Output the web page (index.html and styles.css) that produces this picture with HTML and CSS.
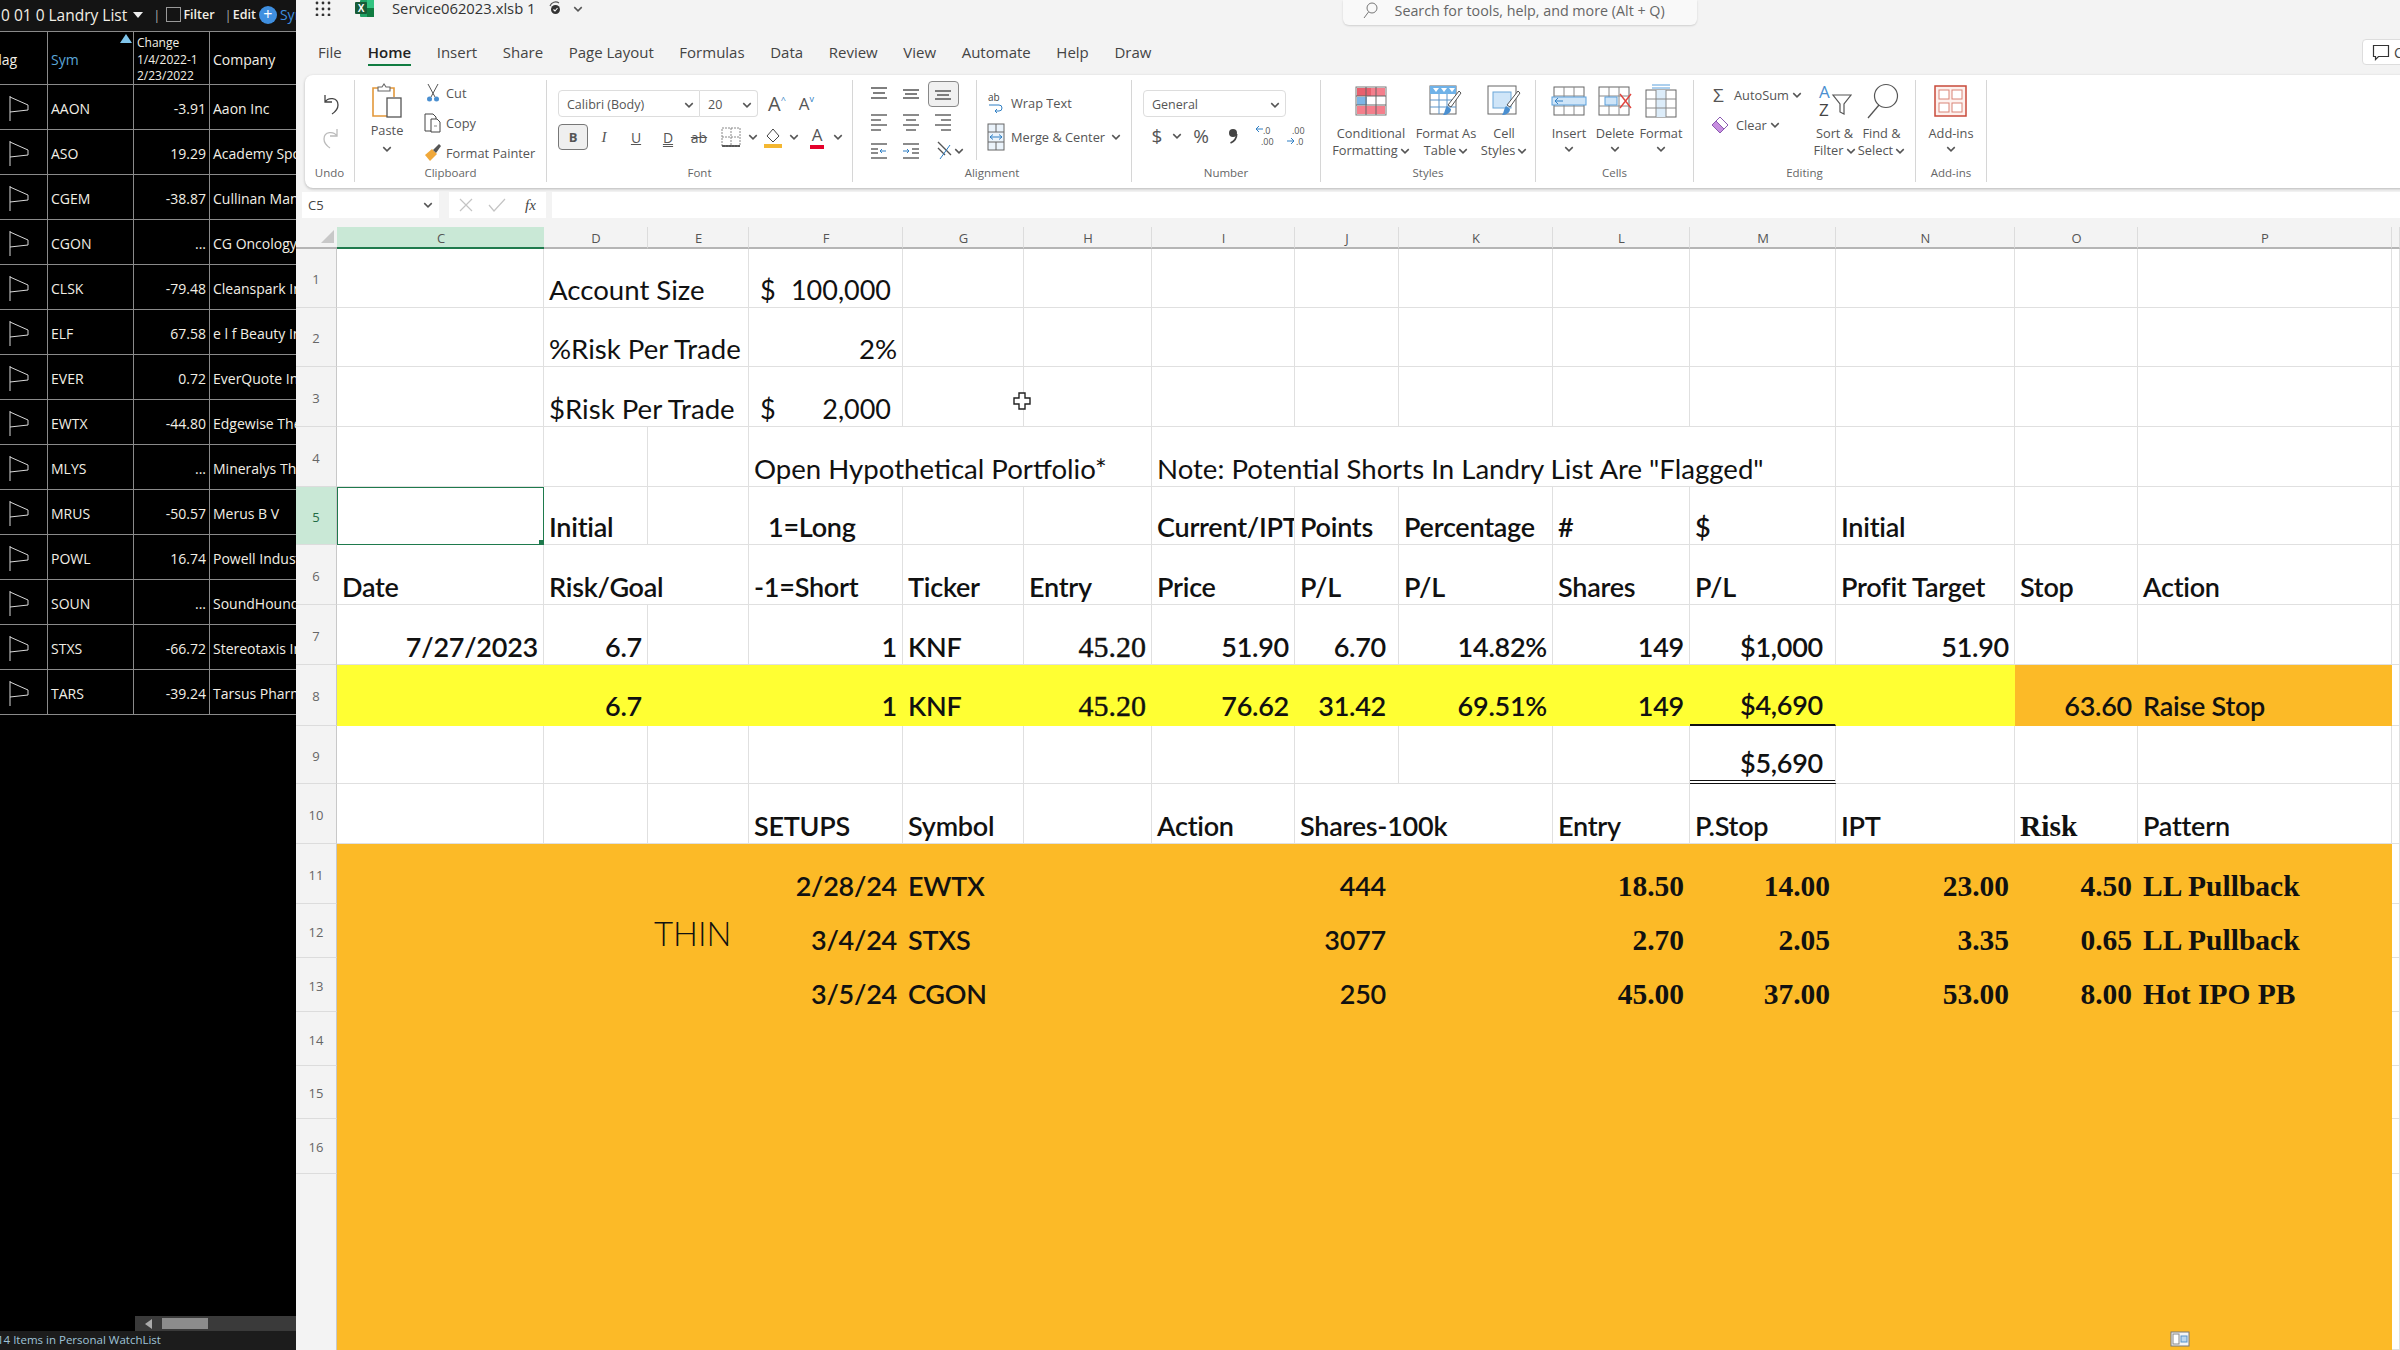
FILE: index.html
```html
<!DOCTYPE html>
<html lang="en">
  <head>
    <meta charset="UTF-8" />
    <title>Service062023.xlsb</title>
    <link rel="stylesheet" href="styles.css">
  </head>
  <body>
    <svg class="sprite">
      <symbol id="chev" viewBox="0 0 8 6"><path d="M1 1.5l3 3 3-3" fill="none" stroke="#555" stroke-width="1.2"/></symbol>
      <symbol id="flag" viewBox="0 0 20 25"><path d="M1 0V25M1 1L19 9V14L1 16" fill="none" stroke="#d8d8d8" stroke-width="1"/></symbol>
    </svg>

    <aside class="watchlist">
      <div class="wl-bar">
        <span class="wl-title">0 01 0 Landry List</span><span class="wl-caret"></span>
        <span class="wl-sep">|</span><span class="wl-check"></span><span class="wl-link">Filter</span>
        <span class="wl-sep">|</span><span class="wl-link">Edit</span>
        <span class="wl-plus">+</span><span class="wl-sym">Symbol</span>
      </div>
      <div class="wl-row wl-head">
        <div class="wl-cell wl-flaghead">Flag</div>
        <div class="wl-cell wl-symhead">Sym<span class="wl-sort"></span></div>
        <div class="wl-cell wl-change">Change<br>1/4/2022-1<br>2/23/2022</div>
        <div class="wl-cell">Company</div>
      </div>
      <div class="wl-row"><div class="wl-cell wl-fl"><svg width="20" height="25"><use href="#flag"/></svg></div><div class="wl-cell">AAON</div><div class="wl-cell wl-num">-3.91</div><div class="wl-cell">Aaon Inc</div></div>
      <div class="wl-row"><div class="wl-cell wl-fl"><svg width="20" height="25"><use href="#flag"/></svg></div><div class="wl-cell">ASO</div><div class="wl-cell wl-num">19.29</div><div class="wl-cell">Academy Sports</div></div>
      <div class="wl-row"><div class="wl-cell wl-fl"><svg width="20" height="25"><use href="#flag"/></svg></div><div class="wl-cell">CGEM</div><div class="wl-cell wl-num">-38.87</div><div class="wl-cell">Cullinan Management</div></div>
      <div class="wl-row"><div class="wl-cell wl-fl"><svg width="20" height="25"><use href="#flag"/></svg></div><div class="wl-cell">CGON</div><div class="wl-cell wl-num">...</div><div class="wl-cell">CG Oncology</div></div>
      <div class="wl-row"><div class="wl-cell wl-fl"><svg width="20" height="25"><use href="#flag"/></svg></div><div class="wl-cell">CLSK</div><div class="wl-cell wl-num">-79.48</div><div class="wl-cell">Cleanspark Inc</div></div>
      <div class="wl-row"><div class="wl-cell wl-fl"><svg width="20" height="25"><use href="#flag"/></svg></div><div class="wl-cell">ELF</div><div class="wl-cell wl-num">67.58</div><div class="wl-cell">e l f Beauty Inc</div></div>
      <div class="wl-row"><div class="wl-cell wl-fl"><svg width="20" height="25"><use href="#flag"/></svg></div><div class="wl-cell">EVER</div><div class="wl-cell wl-num">0.72</div><div class="wl-cell">EverQuote Inc</div></div>
      <div class="wl-row"><div class="wl-cell wl-fl"><svg width="20" height="25"><use href="#flag"/></svg></div><div class="wl-cell">EWTX</div><div class="wl-cell wl-num">-44.80</div><div class="wl-cell">Edgewise Therapeutics</div></div>
      <div class="wl-row"><div class="wl-cell wl-fl"><svg width="20" height="25"><use href="#flag"/></svg></div><div class="wl-cell">MLYS</div><div class="wl-cell wl-num">...</div><div class="wl-cell">Mineralys Therapeutics</div></div>
      <div class="wl-row"><div class="wl-cell wl-fl"><svg width="20" height="25"><use href="#flag"/></svg></div><div class="wl-cell">MRUS</div><div class="wl-cell wl-num">-50.57</div><div class="wl-cell">Merus B V</div></div>
      <div class="wl-row"><div class="wl-cell wl-fl"><svg width="20" height="25"><use href="#flag"/></svg></div><div class="wl-cell">POWL</div><div class="wl-cell wl-num">16.74</div><div class="wl-cell">Powell Industries</div></div>
      <div class="wl-row"><div class="wl-cell wl-fl"><svg width="20" height="25"><use href="#flag"/></svg></div><div class="wl-cell">SOUN</div><div class="wl-cell wl-num">...</div><div class="wl-cell">SoundHound AI</div></div>
      <div class="wl-row"><div class="wl-cell wl-fl"><svg width="20" height="25"><use href="#flag"/></svg></div><div class="wl-cell">STXS</div><div class="wl-cell wl-num">-66.72</div><div class="wl-cell">Stereotaxis Inc</div></div>
      <div class="wl-row"><div class="wl-cell wl-fl"><svg width="20" height="25"><use href="#flag"/></svg></div><div class="wl-cell">TARS</div><div class="wl-cell wl-num">-39.24</div><div class="wl-cell">Tarsus Pharmaceuticals</div></div>
      <div class="wl-fill"></div>
      <div class="wl-scroll"><span class="wl-arrow"></span><span class="wl-thumb"></span></div>
      <div class="wl-status">14 Items in Personal WatchList</div>
    </aside>

    <main class="app">
      <header class="titlebar">
        <svg class="waffle" width="16" height="16" viewBox="0 0 16 16" fill="#333"><circle cx="2" cy="3" r="1.4"/><circle cx="8" cy="3" r="1.4"/><circle cx="14" cy="3" r="1.4"/><circle cx="2" cy="9" r="1.4"/><circle cx="8" cy="9" r="1.4"/><circle cx="14" cy="9" r="1.4"/><circle cx="2" cy="15" r="1.4"/><circle cx="8" cy="15" r="1.4"/><circle cx="14" cy="15" r="1.4"/></svg>
        <svg class="xl-logo" width="19" height="17" viewBox="0 0 19 17"><rect x="5" y="0" width="14" height="17" rx="1" fill="#21a366"/><rect x="12" y="0" width="7" height="8" fill="#33c481"/><rect x="12" y="8" width="7" height="9" fill="#107c41"/><rect x="0" y="2" width="12" height="12" rx="1" fill="#185c37"/><text x="6" y="12" class="xl-x">X</text></svg>
        <span class="doc-name">Service062023.xlsb 1</span>
        <svg class="sync" width="16" height="16" viewBox="0 0 16 16"><path d="M12 3a6 6 0 0 0-9 3" fill="none" stroke="#555" stroke-width="1.2"/><circle cx="8.5" cy="9.5" r="4.5" fill="#333"/><path d="M6.5 9.5l1.5 1.5 2.5-3" fill="none" stroke="#fff" stroke-width="1.1"/></svg>
        <svg class="title-chev" width="10" height="8"><use href="#chev"/></svg>
        <div class="search">
          <svg width="16" height="18" viewBox="0 0 16 18"><circle cx="10" cy="6" r="5" fill="none" stroke="#777"/><path d="M6.5 10L2 16" stroke="#777"/></svg>
          <span>Search for tools, help, and more (Alt + Q)</span>
        </div>
      </header>

      <nav class="tabs">
        <span class="tab tab-file">File</span>
        <span class="tab tab-on">Home</span>
        <span class="tab">Insert</span>
        <span class="tab">Share</span>
        <span class="tab">Page Layout</span>
        <span class="tab">Formulas</span>
        <span class="tab">Data</span>
        <span class="tab">Review</span>
        <span class="tab">View</span>
        <span class="tab">Automate</span>
        <span class="tab">Help</span>
        <span class="tab">Draw</span>
        <div class="comments">
          <svg width="18" height="18" viewBox="0 0 18 18"><path d="M1.5 2.5h15v11h-10l-3 3v-3h-2z" fill="none" stroke="#333" stroke-width="1.2"/></svg>
          <span>Comments</span>
        </div>
      </nav>

      <section class="ribbon">
        <div class="group g-undo">
          <div class="group-body undo-body">
            <svg width="20" height="24" viewBox="0 0 20 24"><path d="M4 3v7h7M4 10c3-5 13-5 13 3 0 4-3 7-6 9" fill="none" stroke="#444" stroke-width="1.3"/></svg>
            <svg width="20" height="24" viewBox="0 0 20 24"><path d="M16 3v7H9M16 10C13 5 3 5 3 13c0 4 3 7 6 9" fill="none" stroke="#bbb" stroke-width="1.3"/></svg>
          </div>
          <div class="group-label">Undo</div>
        </div>

        <div class="group g-clip">
          <div class="group-body clip-body">
            <div class="paste">
              <svg width="32" height="36" viewBox="0 0 32 36"><path d="M8 5H2v28h16" fill="#fff" stroke="#e3983a" stroke-width="1.6"/><path d="M18 5h5v9" fill="none" stroke="#e3983a" stroke-width="1.6"/><path d="M7 8V4h4l2-3 2 3h4v4z" fill="#fff" stroke="#666" stroke-width="1.1"/><rect x="16" y="15" width="14" height="19" fill="#fff" stroke="#555" stroke-width="1.3"/></svg>
              <span>Paste</span>
              <svg width="10" height="8"><use href="#chev"/></svg>
            </div>
            <div class="clip-list">
              <div class="clip-item"><svg width="14" height="20" viewBox="0 0 14 20"><path d="M2 1l7 13M12 1L5 14" stroke="#555" fill="none"/><circle cx="3.5" cy="16" r="2.5" fill="#4a8fd0"/><circle cx="10.5" cy="16" r="2.5" fill="#4a8fd0"/></svg><span>Cut</span></div>
              <div class="clip-item"><svg width="18" height="20" viewBox="0 0 18 20"><path d="M1 1h8l3 3v14H1z" fill="#fff" stroke="#444"/><path d="M7 6h6l3 3v10H7z" fill="#fff" stroke="#444"/><path d="M10 13h3" stroke="#888"/></svg><span>Copy</span></div>
              <div class="clip-item"><svg width="18" height="20" viewBox="0 0 18 20"><path d="M1 12l7-6 5 5-7 7z" fill="#f0a83a"/><path d="M9 7l6-6 2 2-5 7z" fill="#555"/></svg><span>Format Painter</span></div>
            </div>
          </div>
          <div class="group-label">Clipboard</div>
        </div>

        <div class="group g-font">
          <div class="group-body font-body">
            <div class="font-top">
              <div class="combo combo-font"><span>Calibri (Body)</span><svg width="10" height="8"><use href="#chev"/></svg></div>
              <div class="combo combo-size"><span>20</span><svg width="10" height="8"><use href="#chev"/></svg></div>
              <span class="grow">A<sup>^</sup></span>
              <span class="shrink">A<sup>v</sup></span>
            </div>
            <div class="font-tools">
              <span class="btn-bold">B</span>
              <span class="t-i">I</span>
              <span class="t-u">U</span>
              <span class="t-d">D</span>
              <span class="t-s">ab</span>
              <svg width="20" height="20" viewBox="0 0 20 20"><path d="M1 1h18v18H1zM10 1v18M1 10h18" fill="none" stroke="#888" stroke-dasharray="2 1"/><path d="M1 19h18" stroke="#333" stroke-width="1.5"/></svg>
              <svg width="10" height="8"><use href="#chev"/></svg>
              <svg width="20" height="22" viewBox="0 0 20 22"><path d="M4 10l6-7 6 7-6 6z" fill="#fff" stroke="#444"/><rect x="1" y="18" width="18" height="4" fill="#f4b731"/></svg>
              <svg width="10" height="8"><use href="#chev"/></svg>
              <span class="t-color">A</span>
              <svg width="10" height="8"><use href="#chev"/></svg>
            </div>
          </div>
          <div class="group-label">Font</div>
        </div>

        <div class="group g-align">
          <div class="group-body align-body">
            <div class="align-grid">
              <svg width="18" height="14" viewBox="0 0 18 14"><path d="M1 1h16M3 6h12M1 11h16" stroke="#555" stroke-width="1.4"/></svg>
              <svg width="18" height="14" viewBox="0 0 18 14"><path d="M1 3h16M3 7h12M1 11h16" stroke="#555" stroke-width="1.4"/></svg>
              <span class="align-on"><svg width="18" height="14" viewBox="0 0 18 14"><path d="M1 4h16M3 8h12M1 12h16" stroke="#555" stroke-width="1.4"/></svg></span>
              <svg width="18" height="18" viewBox="0 0 18 18"><path d="M1 2h16M1 7h10M1 12h16M1 17h10" stroke="#666" stroke-width="1.3"/></svg>
              <svg width="18" height="18" viewBox="0 0 18 18"><path d="M1 2h16M4 7h10M1 12h16M4 17h10" stroke="#666" stroke-width="1.3"/></svg>
              <svg width="18" height="18" viewBox="0 0 18 18"><path d="M1 2h16M7 7h10M1 12h16M7 17h10" stroke="#666" stroke-width="1.3"/></svg>
              <svg width="18" height="18" viewBox="0 0 18 18"><path d="M1 2h16M1 16h16M1 7h7M1 11h7" stroke="#666" stroke-width="1.3"/><path d="M16 9h-6m2-2l-2 2 2 2" stroke="#2f7fc4" fill="none"/></svg>
              <svg width="18" height="18" viewBox="0 0 18 18"><path d="M1 2h16M1 16h16M10 7h7M10 11h7" stroke="#666" stroke-width="1.3"/><path d="M1 9h6m-2-2l2 2-2 2" stroke="#2f7fc4" fill="none"/></svg>
              <span class="orient"><svg width="18" height="22" viewBox="0 0 18 22"><path d="M2 2l13 13M2 8l7 7" stroke="#555" stroke-width="1.4"/><path d="M14 5L4 19" stroke="#2f7fc4"/></svg><svg width="10" height="8"><use href="#chev"/></svg></span>
            </div>
            <div class="wrap-list">
              <div class="wrap-item"><svg class="ab" width="18" height="24" viewBox="0 0 18 24"><path d="M2 14h10a3 3 0 0 1 0 6H8m2-2l-2 2 2 2" stroke="#2f7fc4" fill="none"/><text x="1" y="10" class="ab-text">ab</text></svg><span>Wrap Text</span></div>
              <div class="wrap-item"><svg width="18" height="28" viewBox="0 0 18 28"><rect x="1" y="1" width="16" height="26" fill="#eaf3fb" stroke="#666"/><path d="M1 9h16M1 19h16M9 1v8M9 19v8" stroke="#666"/><path d="M3 14h12m-9-2.5L3 14l3 2.5m6-5l3 2.5-3 2.5" stroke="#2f7fc4" fill="none"/></svg><span>Merge &amp; Center</span><svg width="10" height="8"><use href="#chev"/></svg></div>
            </div>
          </div>
          <div class="group-label">Alignment</div>
        </div>

        <div class="group g-num">
          <div class="group-body num-body">
            <div class="combo combo-num"><span>General</span><svg width="10" height="8"><use href="#chev"/></svg></div>
            <div class="num-tools">
              <span class="t-big">$</span>
              <svg width="10" height="8"><use href="#chev"/></svg>
              <span class="t-big">%</span>
              <svg width="10" height="16" viewBox="0 0 10 16"><circle cx="5" cy="5" r="4" fill="#444"/><path d="M8.6 6C8.6 10 6 13.5 2.5 15" fill="none" stroke="#444" stroke-width="1.8"/></svg>
              <svg width="20" height="24" viewBox="0 0 20 24"><text x="8" y="10" class="dec">.0</text><text x="6" y="21" class="dec">.00</text><path d="M8 5H1m3-3L1 5l3 3" stroke="#2f7fc4" fill="none"/></svg>
              <svg width="20" height="24" viewBox="0 0 20 24"><text x="6" y="10" class="dec">.00</text><text x="10" y="21" class="dec">.0</text><path d="M1 17h7m-3-3l3 3-3 3" stroke="#2f7fc4" fill="none"/></svg>
            </div>
          </div>
          <div class="group-label">Number</div>
        </div>

        <div class="group g-styles">
          <div class="group-body styles-body">
            <div class="big">
              <svg width="32" height="30" viewBox="0 0 32 30"><rect x="1" y="1" width="30" height="28" fill="#fff" stroke="#777"/><rect x="2" y="2" width="14" height="8" fill="#e8606e"/><rect x="2" y="20" width="28" height="8" fill="#f47f8c"/><rect x="16" y="2" width="14" height="8" fill="#f47f8c"/><rect x="2" y="11" width="10" height="8" fill="#7db6e6"/><path d="M1 10h30M1 19h30M11 1v28M21 1v28" stroke="#666"/></svg>
              <span>Conditional</span>
              <span>Formatting<svg width="10" height="8"><use href="#chev"/></svg></span>
            </div>
            <div class="big">
              <svg width="34" height="32" viewBox="0 0 34 32"><rect x="1" y="1" width="26" height="28" fill="#fff" stroke="#666"/><rect x="1" y="1" width="26" height="8" fill="#6fb2e8"/><path d="M4 3l3 4 3-4zM12 3l3 4 3-4zM20 3l3 4 3-4z" fill="#fff"/><path d="M1 15h26M1 22h26M10 9v20M18 9v20" stroke="#5a93c8"/><path d="M32 8L22 22l-3-2L30 6z" fill="#fff" stroke="#555"/><path d="M18 21l4 3c0 4-4 6-8 6 2-2 2-7 4-9z" fill="#4a8fd0"/></svg>
              <span>Format As</span>
              <span>Table<svg width="10" height="8"><use href="#chev"/></svg></span>
            </div>
            <div class="big">
              <svg width="34" height="32" viewBox="0 0 34 32"><rect x="1" y="1" width="28" height="28" fill="#fff" stroke="#666"/><rect x="6" y="7" width="18" height="16" fill="#cfe5f8" stroke="#6aa6d8"/><path d="M33 8L23 22l-3-2L31 6z" fill="#fff" stroke="#555"/><path d="M19 21l4 3c0 4-4 6-8 6 2-2 2-7 4-9z" fill="#4a8fd0"/></svg>
              <span>Cell</span>
              <span>Styles<svg width="10" height="8"><use href="#chev"/></svg></span>
            </div>
          </div>
          <div class="group-label">Styles</div>
        </div>

        <div class="group g-cells">
          <div class="group-body cells-body">
            <div class="big">
              <svg width="36" height="30" viewBox="0 0 36 30"><rect x="3" y="1" width="30" height="28" fill="#fff" stroke="#666"/><path d="M3 10h30M3 20h30M13 1v28M23 1v28" stroke="#888"/><rect x="1" y="11" width="34" height="8" fill="#cfe5f8" stroke="#5aa0dc"/><path d="M12 15H4m3-3l-3 3 3 3" stroke="#2f7fc4" fill="none"/></svg>
              <span>Insert</span>
              <svg width="10" height="8"><use href="#chev"/></svg>
            </div>
            <div class="big">
              <svg width="36" height="30" viewBox="0 0 36 30"><rect x="2" y="1" width="30" height="28" fill="#fff" stroke="#666"/><path d="M2 10h30M2 20h30M12 1v28M22 1v28" stroke="#888"/><rect x="8" y="11" width="12" height="8" fill="#cfe5f8" stroke="#5aa0dc"/><path d="M23 8l11 14M34 8L23 22" stroke="#e0443e" stroke-width="1.4"/></svg>
              <span>Delete</span>
              <svg width="10" height="8"><use href="#chev"/></svg>
            </div>
            <div class="big">
              <svg width="34" height="34" viewBox="0 0 34 34"><path d="M8 1h18M8 4h18" stroke="#5aa0dc"/><rect x="2" y="6" width="30" height="27" fill="#fff" stroke="#666"/><rect x="12" y="6" width="10" height="27" fill="#dcecf9"/><path d="M2 15h30M2 24h30M12 6v27M22 6v27" stroke="#888"/></svg>
              <span>Format</span>
              <svg width="10" height="8"><use href="#chev"/></svg>
            </div>
          </div>
          <div class="group-label">Cells</div>
        </div>

        <div class="group g-edit">
          <div class="group-body edit-body">
            <div class="edit-list">
              <div class="edit-item"><span class="sigma">&Sigma;</span><span>AutoSum</span><svg width="10" height="8"><use href="#chev"/></svg></div>
              <div class="edit-item"><svg class="eraser" width="18" height="18" viewBox="0 0 18 18"><path d="M9 1l8 8-8 8-8-8z" fill="#fff" stroke="#8a5ab0"/><path d="M5 5l8 8-4 4-8-8z" fill="#c78fe0" stroke="#8a5ab0"/></svg><span>Clear</span><svg width="10" height="8"><use href="#chev"/></svg></div>
            </div>
            <div class="big">
              <svg width="34" height="36" viewBox="0 0 34 36"><text x="1" y="15" class="az-a">A</text><text x="1" y="33" class="az-z">Z</text><path d="M15 12h18l-7 9v10l-4-2v-8z" fill="none" stroke="#555" stroke-width="1.2"/></svg>
              <span>Sort &amp;</span>
              <span>Filter<svg width="10" height="8"><use href="#chev"/></svg></span>
            </div>
            <div class="big">
              <svg width="34" height="36" viewBox="0 0 34 36"><circle cx="21" cy="13" r="11.5" fill="none" stroke="#555" stroke-width="1.2"/><path d="M14 22L3 35" stroke="#555" stroke-width="1.3"/></svg>
              <span>Find &amp;</span>
              <span>Select<svg width="10" height="8"><use href="#chev"/></svg></span>
            </div>
          </div>
          <div class="group-label">Editing</div>
        </div>

        <div class="group g-addins">
          <div class="group-body addins-body">
            <div class="big">
              <svg width="33" height="32" viewBox="0 0 33 32"><rect x="1" y="1" width="31" height="30" fill="#fdf1ee" stroke="#c8493a" stroke-width="1.5"/><rect x="5" y="5" width="10" height="9" fill="#fff" stroke="#d98476"/><rect x="18" y="5" width="10" height="9" fill="#fff" stroke="#d98476"/><rect x="5" y="18" width="10" height="9" fill="#fff" stroke="#d98476"/><rect x="18" y="18" width="10" height="9" fill="#fff" stroke="#d98476"/></svg>
              <span>Add-ins</span>
              <svg width="10" height="8"><use href="#chev"/></svg>
            </div>
          </div>
          <div class="group-label">Add-ins</div>
        </div>
      </section>

      <div class="formula-bar">
        <div class="name-box"><span>C5</span><svg width="10" height="8"><use href="#chev"/></svg></div>
        <div class="fx-box">
          <svg width="16" height="16" viewBox="0 0 16 16"><path d="M2 2l12 12M14 2L2 14" stroke="#c4c4c4" stroke-width="1.2"/></svg>
          <svg width="18" height="16" viewBox="0 0 18 16"><path d="M1 8l5 6L17 2" fill="none" stroke="#c4c4c4" stroke-width="1.2"/></svg>
          <span class="fx">fx</span>
        </div>
        <div class="formula-input"></div>
      </div>

      <table class="sheet">
        <colgroup>
          <col class="w-rh"><col class="w-c"><col class="w-d"><col class="w-e"><col class="w-f"><col class="w-g"><col class="w-h"><col class="w-i"><col class="w-j"><col class="w-k"><col class="w-l"><col class="w-m"><col class="w-n"><col class="w-o"><col class="w-p"><col class="w-q">
        </colgroup>
        <thead>
          <tr>
            <th class="corner"><span class="corner-mark"></span></th>
            <th class="col-on">C</th><th>D</th><th>E</th><th>F</th><th>G</th><th>H</th><th>I</th><th>J</th><th>K</th><th>L</th><th>M</th><th>N</th><th>O</th><th>P</th><th></th>
          </tr>
        </thead>
        <tbody>
          <tr class="h59">
            <th class="rh">1</th><td></td><td colspan="2" class="n">Account Size</td>
            <td><div class="acct"><span>$</span><span>100,000</span></div></td>
            <td></td><td></td><td></td><td></td><td></td><td></td><td></td><td></td><td></td><td></td><td></td>
          </tr>
          <tr class="h59">
            <th class="rh">2</th><td></td><td colspan="2" class="n">%Risk Per Trade</td>
            <td class="r n">2%</td>
            <td></td><td></td><td></td><td></td><td></td><td></td><td></td><td></td><td></td><td></td><td></td>
          </tr>
          <tr class="h60">
            <th class="rh">3</th><td></td><td colspan="2" class="n">$Risk Per Trade</td>
            <td><div class="acct"><span>$</span><span>2,000</span></div></td>
            <td></td><td></td><td></td><td></td><td></td><td></td><td></td><td></td><td></td><td></td><td></td>
          </tr>
          <tr class="h60">
            <th class="rh">4</th><td></td><td></td><td></td>
            <td colspan="3" class="n">Open Hypothetical Portfolio*</td>
            <td colspan="5" class="n">Note: Potential Shorts In Landry List Are "Flagged"</td>
            <td></td><td></td><td></td><td></td>
          </tr>
          <tr class="h58">
            <th class="rh rh-on">5</th><td class="sel"></td><td>Initial</td><td></td>
            <td class="ind">1=Long</td><td></td><td></td>
            <td>Current/IPT</td><td>Points</td><td>Percentage</td><td>#</td><td>$</td><td>Initial</td><td></td><td></td><td></td>
          </tr>
          <tr class="h60">
            <th class="rh">6</th><td>Date</td><td colspan="2">Risk/Goal</td>
            <td>-1=Short</td><td>Ticker</td><td>Entry</td><td>Price</td><td>P/L</td><td>P/L</td><td>Shares</td><td>P/L</td><td>Profit Target</td><td>Stop</td><td>Action</td><td></td>
          </tr>
          <tr class="h60">
            <th class="rh">7</th><td class="r">7/27/2023</td><td class="r">6.7</td><td></td>
            <td class="r">1</td><td>KNF</td><td class="r entry">45.20</td><td class="r">51.90</td><td class="r pad">6.70</td><td class="r">14.82%</td><td class="r">149</td><td class="r pad">$1,000</td><td class="r">51.90</td><td></td><td></td><td></td>
          </tr>
          <tr class="h61 yellow">
            <th class="rh">8</th><td></td><td class="r">6.7</td><td></td>
            <td class="r">1</td><td>KNF</td><td class="r entry">45.20</td><td class="r">76.62</td><td class="r pad">31.42</td><td class="r">69.51%</td><td class="r">149</td><td class="r pad under">$4,690</td><td></td><td class="orange r">63.60</td><td class="orange">Raise Stop</td><td class="plain"></td>
          </tr>
          <tr class="h58">
            <th class="rh">9</th><td></td><td></td><td></td><td></td><td></td><td></td><td></td><td></td><td></td><td></td><td class="r pad double">$5,690</td><td></td><td></td><td></td><td></td>
          </tr>
          <tr class="h60">
            <th class="rh">10</th><td></td><td></td><td></td>
            <td>SETUPS</td><td>Symbol</td><td></td><td>Action</td><td colspan="2">Shares-100k</td><td>Entry</td><td>P.Stop</td><td>IPT</td><td class="s">Risk</td><td>Pattern</td><td></td>
          </tr>
          <tr class="h60 fill">
            <th class="rh">11</th><td></td><td></td><td></td>
            <td class="r">2/28/24</td><td>EWTX</td><td></td><td></td><td class="r pad">444</td><td></td><td class="r s">18.50</td><td class="r s">14.00</td><td class="r s">23.00</td><td class="r s">4.50</td><td class="s">LL Pullback</td><td class="plain"></td>
          </tr>
          <tr class="h54 fill">
            <th class="rh">12</th><td></td><td></td><td class="thin-cell"><span class="thin">THIN</span></td>
            <td class="r">3/4/24</td><td>STXS</td><td></td><td></td><td class="r pad">3077</td><td></td><td class="r s">2.70</td><td class="r s">2.05</td><td class="r s">3.35</td><td class="r s">0.65</td><td class="s">LL Pullback</td><td class="plain"></td>
          </tr>
          <tr class="h54 fill">
            <th class="rh">13</th><td></td><td></td><td></td>
            <td class="r">3/5/24</td><td>CGON</td><td></td><td></td><td class="r pad">250</td><td></td><td class="r s">45.00</td><td class="r s">37.00</td><td class="r s">53.00</td><td class="r s">8.00</td><td class="s">Hot IPO PB</td><td class="plain"></td>
          </tr>
          <tr class="h54 fill"><th class="rh">14</th><td colspan="14"></td><td class="plain"></td></tr>
          <tr class="h53 fill"><th class="rh">15</th><td colspan="14"></td><td class="plain"></td></tr>
          <tr class="h55 fill"><th class="rh">16</th><td colspan="14"></td><td class="plain"></td></tr>
          <tr class="h176 fill"><th class="rh rh-end"></th><td colspan="14"></td><td class="plain"></td></tr>
        </tbody>
      </table>
    </main>

    <svg class="cursor" width="18" height="18" viewBox="0 0 18 18"><path d="M6 1h6v5h5v6h-5v5H6v-5H1V6h5z" fill="#fff" stroke="#222" stroke-width="1.4"/></svg>
    <svg class="paste-tag" width="20" height="16" viewBox="0 0 20 16"><rect x="1" y="1" width="18" height="14" fill="#f4f4f4" stroke="#777"/><rect x="3" y="3" width="6" height="10" fill="#fff" stroke="#888"/><rect x="11" y="5" width="6" height="6" fill="#bcd7ee" stroke="#5a93c8"/></svg>
  </body>
</html>
```

FILE: styles.css
```css
* {
  box-sizing: border-box;
}

body {
  margin: 0;
  width: 2400px;
  height: 1350px;
  display: flex;
  overflow: hidden;
  position: relative;
  background: #f3f3f3;
  font-family: "Open Sans", sans-serif;
  color: #444;
}

.sprite {
  display: none;
}

/* watchlist on the left */
.watchlist {
  width: 296px;
  height: 1350px;
  flex-shrink: 0;
  background: #000;
  color: #f2efe6;
  font-size: 14px;
  display: flex;
  flex-direction: column;
  overflow: hidden;
}

.wl-bar {
  height: 31px;
  background: #141414;
  display: flex;
  align-items: center;
  white-space: nowrap;
  overflow: hidden;
  padding-bottom: 2px;
}

.wl-bar > * {
  flex-shrink: 0;
}

.wl-title {
  font-size: 15.5px;
  margin-left: 1px;
}

.wl-caret {
  border-left: 5px solid transparent;
  border-right: 5px solid transparent;
  border-top: 6px solid #eee;
  margin-left: 6px;
}

.wl-sep {
  margin: 0 6px 0 10px;
  color: #aaa;
  font-size: 13px;
}

.wl-sep + .wl-link {
  margin-left: -5px;
}

.wl-check {
  width: 15px;
  height: 15px;
  border: 1px solid #999;
  margin-right: 2px;
}

.wl-link {
  font-size: 12.5px;
  font-weight: 600;
}

.wl-plus {
  width: 18px;
  height: 18px;
  border-radius: 50%;
  background: #3f8fe0;
  color: #fff;
  text-align: center;
  line-height: 17px;
  font-size: 16px;
  margin-left: 3px;
}

.wl-sym {
  color: #3f8fe0;
  margin-left: 3px;
  font-size: 14px;
}

.wl-row {
  display: grid;
  grid-template-columns: 48px 86px 76px 86px;
  height: 45px;
  flex-shrink: 0;
  border-bottom: 1px solid #8a8a8a;
}

.wl-head {
  height: 54px;
  border-top: 1px solid #8a8a8a;
}

.wl-cell {
  display: flex;
  align-items: center;
  padding: 2px 0 0 3px;
  border-right: 1px solid #8a8a8a;
  overflow: hidden;
  white-space: nowrap;
}

.wl-cell:last-child {
  border-right: none;
}

.wl-flaghead {
  padding-left: 0;
  text-indent: -9px;
}

.wl-symhead {
  color: #5aa5d8;
  position: relative;
}

.wl-sort {
  position: absolute;
  right: 1px;
  top: 2px;
  border-left: 6px solid transparent;
  border-right: 6px solid transparent;
  border-top: none;
  border-bottom: 9px solid #7fc4ea;
}

.wl-change {
  display: block;
  font-size: 12px;
  line-height: 16.5px;
  padding-top: 3px;
}

.wl-num {
  justify-content: flex-end;
  padding-right: 3px;
}

.wl-fl {
  padding-left: 9px;
}

.wl-fill {
  flex: 1;
}

.wl-scroll {
  height: 15px;
  margin-left: 135px;
  background: #3a3a3a;
  display: flex;
  align-items: center;
  flex-shrink: 0;
}

.wl-arrow {
  border-top: 5px solid transparent;
  border-bottom: 5px solid transparent;
  border-right: 7px solid #aaa;
  margin-left: 10px;
}

.wl-thumb {
  width: 46px;
  height: 11px;
  background: #8c8c8c;
  margin-left: 10px;
}

.wl-status {
  height: 19px;
  background: #1c1c1c;
  color: #9fc3d8;
  font-size: 11.5px;
  line-height: 18px;
  white-space: nowrap;
  text-indent: -3px;
  flex-shrink: 0;
}

/* excel side */
.app {
  width: 2104px;
  flex-shrink: 0;
  display: flex;
  flex-direction: column;
  overflow: hidden;
}

.titlebar {
  height: 30px;
  display: flex;
  align-items: flex-start;
  flex-shrink: 0;
}

.waffle {
  margin: 0 0 0 19px;
}

.xl-logo {
  margin-left: 24px;
}

.xl-x {
  font: bold 10px "Liberation Sans", sans-serif;
  fill: #fff;
  text-anchor: middle;
}

.doc-name {
  margin: -2px 0 0 18px;
  font-size: 14.8px;
  line-height: 20px;
  color: #333;
}

.sync {
  margin-left: 11px;
}

.title-chev {
  margin: 5px 0 0 10px;
}

.search {
  margin-left: 760px;
  width: 354px;
  height: 25px;
  background: #f9f9f9;
  border-radius: 0 0 6px 6px;
  box-shadow: 0 1px 2px rgba(0, 0, 0, 0.15);
  display: flex;
  align-items: center;
  gap: 17px;
  padding: 0 0 4px 19px;
  font-size: 14.3px;
  color: #666;
  white-space: nowrap;
}

.tabs {
  height: 45px;
  display: flex;
  align-items: center;
  font-size: 15px;
  color: #444;
  position: relative;
  flex-shrink: 0;
  padding-left: 22px;
  padding-bottom: 1px;
}

.tab {
  margin-right: 25.6px;
  white-space: nowrap;
}

.tab-file {
  margin-right: 26px;
}

.tab-on {
  font-weight: 600;
  color: #222;
  position: relative;
}

.tab-on::after {
  content: "";
  position: absolute;
  left: 0;
  right: 0;
  bottom: -4px;
  height: 2px;
  background: #107c41;
}

.comments {
  margin-left: auto;
  width: 120px;
  height: 26px;
  margin-right: -82px;
  background: #fff;
  border: 1px solid #ddd;
  border-radius: 4px;
  display: flex;
  align-items: center;
  gap: 4px;
  padding-left: 9px;
  font-size: 14px;
  flex-shrink: 0;
}

/* ribbon */
.ribbon {
  height: 113px;
  margin-left: 9px;
  margin-right: -10px;
  background: #fff;
  border-radius: 8px 0 0 8px;
  box-shadow: 0 1px 3px rgba(0, 0, 0, 0.25);
  display: flex;
  padding-top: 5px;
  flex-shrink: 0;
  font-size: 12.8px;
  color: #555;
}

.group {
  height: 102px;
  display: flex;
  flex-direction: column;
  border-right: 1px solid #d6d6d6;
  flex-shrink: 0;
}

.group-body {
  height: 84px;
  display: flex;
}

.group-label {
  height: 18px;
  line-height: 18px;
  text-align: center;
  font-size: 11.5px;
  color: #666;
}

.g-undo { width: 50px; }
.g-clip { width: 192px; }
.g-font { width: 306px; }
.g-align { width: 279px; }
.g-num { width: 189px; }
.g-styles { width: 215px; }
.g-cells { width: 158px; }
.g-edit { width: 222px; }
.g-addins { width: 71px; }

.undo-body {
  flex-direction: column;
  align-items: center;
  gap: 10px;
  padding-top: 12px;
  padding-left: 2px;
}

.clip-body {
  padding-left: 12px;
}

.paste {
  width: 40px;
  display: flex;
  flex-direction: column;
  align-items: center;
  padding-top: 3px;
}

.paste span {
  margin-top: 2px;
  line-height: 18px;
}

.paste svg:last-child {
  margin-top: 6px;
}

.clip-list {
  margin-left: 17px;
  padding-top: 3px;
  display: flex;
  flex-direction: column;
  gap: 10px;
}

.clip-item {
  height: 20px;
  display: flex;
  align-items: center;
  white-space: nowrap;
}

.clip-item svg {
  width: 18px;
  flex-shrink: 0;
  margin-right: 4px;
}

.font-body {
  flex-direction: column;
  padding: 10px 0 0 11px;
}

.font-top {
  display: flex;
  align-items: center;
  height: 27px;
}

.combo {
  height: 27px;
  background: #fff;
  border: 1px solid #ddd;
  display: flex;
  align-items: center;
  justify-content: space-between;
  padding: 2px 5px 0 8px;
  font-size: 12.5px;
}

.combo-font {
  width: 142px;
  border-radius: 4px 0 0 4px;
}

.combo-size {
  width: 58px;
  border-left: none;
  border-radius: 0 4px 4px 0;
}

.grow,
.shrink {
  font-size: 20px;
  color: #555;
  line-height: 24px;
}

.grow {
  margin-left: 10px;
}

.shrink {
  margin-left: 13px;
  font-size: 17px;
}

.grow sup,
.shrink sup {
  font-size: 9px;
  color: #2f7fc4;
  vertical-align: 8px;
  line-height: 0;
}

.font-tools {
  display: grid;
  grid-template-columns: 30px 32px 32px 32px 30px 33px 12px 28px 14px 32px 10px;
  align-items: center;
  justify-items: center;
  margin-top: 7px;
  height: 25px;
}

.btn-bold {
  width: 30px;
  height: 26px;
  background: #efefef;
  border: 1px solid #777;
  border-radius: 4px;
  text-align: center;
  line-height: 24px;
  font-weight: 700;
  font-size: 13px;
}

.t-i {
  font: italic 15px "Liberation Serif", serif;
}

.t-u {
  text-decoration: underline;
  font-size: 14px;
}

.t-d {
  text-decoration: underline;
  text-decoration-style: double;
  font-size: 14px;
}

.t-s {
  text-decoration: line-through;
  font-size: 14px;
}

.t-color {
  font-size: 17px;
  line-height: 20px;
  border-bottom: 4px solid #e4002b;
  padding: 0 2px;
}

.align-body {
  padding-left: 10px;
}

.align-grid {
  display: grid;
  grid-template-columns: 32px 32px 32px;
  grid-template-rows: 27px 30px 27px;
  align-items: center;
  justify-items: center;
}

.align-on {
  width: 31px;
  height: 26px;
  background: #f0f0f0;
  border: 1px solid #888;
  border-radius: 4px;
  display: flex;
  align-items: center;
  justify-content: center;
}

.orient {
  display: flex;
  align-items: center;
  margin-left: 14px;
}

.wrap-list {
  margin-left: 17px;
  padding: 8px 0 0 10px;
  border-left: 1px solid #d6d6d6;
  height: 80px;
  display: flex;
  flex-direction: column;
  gap: 4px;
}

.wrap-item {
  height: 30px;
  display: flex;
  align-items: center;
  gap: 6px;
  white-space: nowrap;
}

.ab-text {
  font: 10px "Open Sans", sans-serif;
  fill: #444;
}

.num-body {
  flex-direction: column;
  padding: 10px 0 0 11px;
}

.combo-num {
  width: 143px;
  border-radius: 4px;
}

.num-tools {
  display: grid;
  grid-template-columns: 28px 12px 36px 28px 36px 26px;
  align-items: center;
  justify-items: center;
  margin-top: 6px;
  height: 26px;
}

.t-big {
  font-size: 19px;
  color: #555;
}

.dec {
  font: 9px "Open Sans", sans-serif;
  fill: #555;
}

.styles-body {
  padding-left: 9px;
  display: grid;
  grid-template-columns: 82px 68px 48px;
}

.cells-body {
  padding-left: 10px;
  display: grid;
  grid-template-columns: 46px 46px 46px;
}

.big {
  display: flex;
  flex-direction: column;
  align-items: center;
  line-height: 17px;
  white-space: nowrap;
}

.big > svg:first-child {
  height: 36px;
  margin: 3px 0 6px;
  flex-shrink: 0;
}

.big svg:not(:first-child) {
  margin-top: 3px;
}

.big span svg {
  margin-left: 2px;
}

.edit-body {
  padding-left: 17px;
}

.edit-list {
  width: 100px;
  padding-top: 4px;
  display: flex;
  flex-direction: column;
  gap: 8px;
}

.edit-item {
  height: 22px;
  display: flex;
  align-items: center;
  white-space: nowrap;
}

.edit-item span:nth-child(2) {
  margin-left: 7px;
  margin-right: 3px;
}

.sigma {
  font-size: 19px;
  width: 14px;
  margin-left: 2px;
}

.eraser {
  flex-shrink: 0;
}

.edit-body .big {
  width: 47px;
}

.az-a {
  font: 17px "Open Sans", sans-serif;
  fill: #4a8fd0;
}

.az-z {
  font: 17px "Open Sans", sans-serif;
  fill: #444;
}

.addins-body {
  justify-content: center;
}

/* formula bar */
.formula-bar {
  height: 26px;
  margin-top: 4px;
  display: flex;
  flex-shrink: 0;
  padding-left: 6px;
}

.name-box {
  width: 137px;
  background: #fff;
  display: flex;
  align-items: center;
  justify-content: space-between;
  padding: 0 6px;
  font-size: 13px;
}

.fx-box {
  width: 97px;
  margin-left: 10px;
  background: #fff;
  display: flex;
  align-items: center;
  gap: 14px;
  padding-left: 9px;
}

.fx {
  font: italic 15px "Liberation Serif", serif;
  margin-left: 5px;
}

.formula-input {
  flex: 1;
  margin-left: 6px;
  background: #fff;
}

/* the sheet */
.sheet {
  margin-top: 9px;
  width: 2104px;
  table-layout: fixed;
  border-collapse: separate;
  border-spacing: 0;
  background: #fff;
  font-family: Lato, sans-serif;
  font-size: 27px;
  font-weight: 600;
  letter-spacing: -0.25px;
  color: #111;
}

.w-rh { width: 41px; }
.w-c { width: 207px; }
.w-d { width: 104px; }
.w-e { width: 101px; }
.w-f { width: 154px; }
.w-g { width: 121px; }
.w-h { width: 128px; }
.w-i { width: 143px; }
.w-j { width: 104px; }
.w-k { width: 154px; }
.w-l { width: 137px; }
.w-m { width: 146px; }
.w-n { width: 179px; }
.w-o { width: 123px; }
.w-p { width: 254px; }
.w-q { width: 8px; }

.sheet thead th {
  height: 21px;
  padding: 2px 0 0 1px;
  background: #f3f3f3;
  border-right: 1px solid #dcdcdc;
  border-bottom: 2px solid #b5b5b5;
  font: 13px "Open Sans", sans-serif;
  letter-spacing: 0;
  color: #555;
}

.sheet thead .corner {
  border-right: none;
  text-align: right;
}

.corner-mark {
  display: inline-block;
  margin: 0 3px 0 0;
  border-left: 13px solid transparent;
  border-bottom: 13px solid #c8c8c8;
}

.sheet thead .col-on {
  background: #c9e8d6;
  border-bottom-color: #1f7a4d;
  border-right: none;
}

.sheet td {
  padding: 0 5px;
  line-height: 34px;
  vertical-align: bottom;
  border-right: 1px solid #e0e0e0;
  border-bottom: 1px solid #e0e0e0;
  white-space: nowrap;
  overflow: hidden;
}

.sheet .rh {
  padding: 2px 0 0;
  background: #f3f3f3;
  border-right: 1px solid #c8c8c8;
  border-bottom: 1px solid #dcdcdc;
  font: 13px "Open Sans", sans-serif;
  letter-spacing: 0;
  color: #666;
}

.sheet .rh-on {
  background: #c9e8d6;
  color: #1f6b45;
}

.sheet .rh-end {
  border-bottom: none;
}

.h53 { height: 53px; }
.h54 { height: 54px; }
.h55 { height: 55px; }
.h58 { height: 58px; }
.h59 { height: 59px; }
.h60 { height: 60px; }
.h61 { height: 61px; }
.h176 { height: 176px; }

.sheet td.r { text-align: right; }
.sheet td.ind { padding-left: 19px; }
.sheet td.pad { padding-right: 12px; }

.sheet .yellow td {
  padding-bottom: 2px;
}

.sheet td.n {
  font-size: 27.6px;
  font-weight: 400;
  letter-spacing: 0;
}

.sheet td.s,
.sheet td.entry {
  font-family: "Liberation Serif", serif;
  font-size: 29.5px;
  font-weight: 700;
  letter-spacing: 0;
}

.sheet td.entry {
  font-size: 30px;
  font-weight: 400;
  -webkit-text-stroke: 0.4px #111;
}

.acct {
  display: flex;
  justify-content: space-between;
  padding: 0 6px;
  font-weight: 400;
  letter-spacing: 0;
}

.sel {
  position: relative;
  outline: 1.5px solid #1f7a4d;
  outline-offset: -1px;
}

.sel::after {
  content: "";
  position: absolute;
  right: -1px;
  bottom: -1px;
  width: 5px;
  height: 5px;
  background: #1f7a4d;
}

.sheet td.under { border-bottom: 2px solid #111; }
.sheet td.double { border-bottom: 4px double #111; }

.yellow td {
  background: #ffff33;
  border-right-color: #ffff33;
  border-bottom-color: #ffff33;
}

.yellow td.orange,
.fill td {
  background: #fcba27;
  border-right-color: #fcba27;
  border-bottom-color: #fcba27;
}

.sheet tr td.plain {
  background: #fff;
  border-right-color: #e0e0e0;
  border-bottom-color: #e0e0e0;
}

.sheet td.thin-cell {
  overflow: visible;
  padding-top: 7px;
  vertical-align: middle;
}

.thin {
  font-size: 33px;
  font-weight: 300;
  letter-spacing: 0;
  color: #111;
  margin-left: 1px;
}

/* floating bits */
.cursor {
  position: absolute;
  left: 1013px;
  top: 392px;
}

.paste-tag {
  position: absolute;
  left: 2170px;
  top: 1331px;
}
```
